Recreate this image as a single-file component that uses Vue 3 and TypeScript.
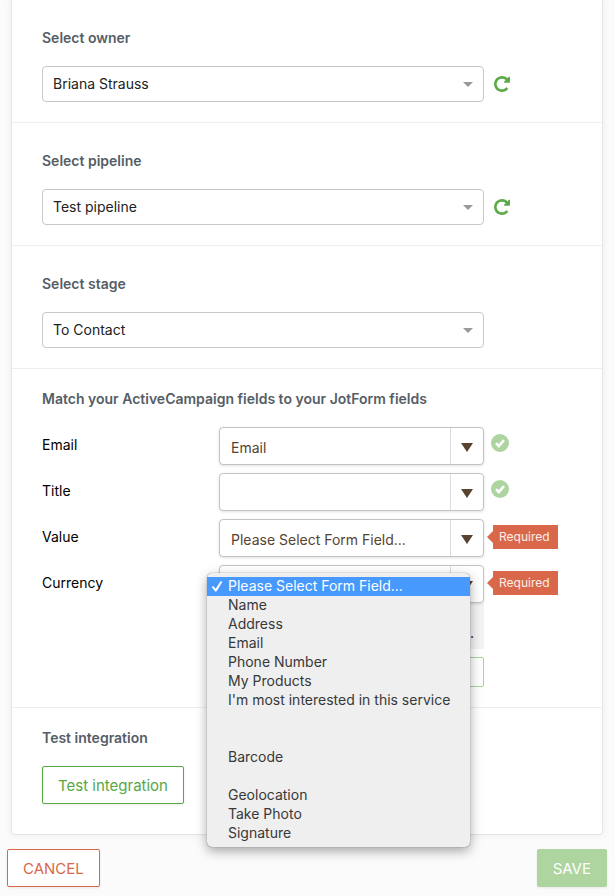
<script setup lang="ts">
import { ref } from 'vue'

interface Picker {
  id: string
  title: string
  value: string
  refreshable: boolean
}

interface FieldMatch {
  id: string
  label: string
  value: string
  matched: boolean
}

const placeholder = 'Please Select Form Field...'

const pickers = ref<Picker[]>([
  { id: 'owner', title: 'Select owner', value: 'Briana Strauss', refreshable: true },
  { id: 'pipeline', title: 'Select pipeline', value: 'Test pipeline', refreshable: true },
  { id: 'stage', title: 'Select stage', value: 'To Contact', refreshable: false },
])

const fields = ref<FieldMatch[]>([
  { id: 'email', label: 'Email', value: 'Email', matched: true },
  { id: 'title', label: 'Title', value: '', matched: true },
  { id: 'value', label: 'Value', value: placeholder, matched: false },
  { id: 'currency', label: 'Currency', value: placeholder, matched: false },
])

const openField = ref('currency')

const options: string[] = [
  placeholder,
  'Name',
  'Address',
  'Email',
  'Phone Number',
  'My Products',
  "I'm most interested in this service",
  '',
  '',
  'Barcode',
  '',
  'Geolocation',
  'Take Photo',
  'Signature',
]

function choose(field: FieldMatch, option: string) {
  field.value = option
  openField.value = ''
}
</script>

<template>
  <main class="page">
    <div class="card">
      <section v-for="picker in pickers" :key="picker.id" class="section picker">
        <label class="title" :for="picker.id">{{ picker.title }}</label>
        <div class="line">
          <div class="picker-box">
            <select :id="picker.id" class="picker-select">
              <option>{{ picker.value }}</option>
            </select>
            <svg class="caret" viewBox="0 0 10 5" aria-hidden="true"><path d="M0 0h10L5 5z" fill="#999" /></svg>
          </div>
          <button v-if="picker.refreshable" class="refresh" type="button" aria-label="Refresh">
            <svg viewBox="128 128 1536 1536" aria-hidden="true">
              <path
                fill="#5dab48"
                d="M1664 256v448q0 26-19 45t-45 19h-448q-42 0-59-40-17-39 14-69l138-138q-148-137-349-137-104 0-198.5 40.5t-163.5 109.5-109.5 163.5-40.5 198.5 40.5 198.5 109.5 163.5 163.5 109.5 198.5 40.5q119 0 225-52t179-147q7-10 23-12 15 0 25 9l137 138q9 8 9.5 20.5t-7.5 22.5q-109 132-264 204.5t-327 72.5q-156 0-298-61t-245-164-164-245-61-298 61-298 164-245 245-164 298-61q147 0 284.5 55.5t244.5 156.5l130-129q29-31 70-14 39 17 39 59z"
              />
            </svg>
          </button>
        </div>
      </section>

      <section class="section">
        <h2 class="title">Match your ActiveCampaign fields to your JotForm fields</h2>
        <div class="rows">
          <div v-for="field in fields" :key="field.id" class="row">
            <label class="label" :for="field.id">{{ field.label }}</label>
            <div class="field">
              <div class="field-box">
                <select :id="field.id" v-model="field.value" class="field-select">
                  <option v-for="(option, i) in options" :key="i" :value="option">{{ option }}</option>
                </select>
                <span class="field-arrow">
                  <svg viewBox="0 0 12 9" aria-hidden="true"><path d="M0 0h12L6 9z" fill="#57432f" /></svg>
                </span>
              </div>
              <ul v-if="openField === field.id" class="menu" role="listbox" :aria-label="field.label">
                <li
                  v-for="(option, i) in options"
                  :key="i"
                  class="option"
                  :class="{ active: i === 0 }"
                  role="option"
                  :aria-selected="i === 0"
                  @click="choose(field, option)"
                >
                  <svg v-if="i === 0" class="tick" viewBox="0 0 10 11" aria-hidden="true">
                    <path d="M1 6.2l2.8 3.4L9 1.2" fill="none" stroke="#fff" stroke-width="2" stroke-linecap="round" stroke-linejoin="round" />
                  </svg>
                  {{ option }}
                </li>
              </ul>
            </div>
            <span v-if="field.matched" class="status ok">
              <svg viewBox="0 0 18 18" role="img" aria-label="Matched">
                <circle cx="9" cy="9" r="9" fill="#aed4a0" />
                <path d="M5 9.2l2.8 2.8L13 6.2" fill="none" stroke="#fff" stroke-width="2.6" />
              </svg>
            </span>
            <span v-else class="status"><span class="required">Required</span></span>
          </div>
        </div>
        <div class="extra">
          <p class="note">.</p>
          <button class="add" type="button" aria-label="Add field"></button>
        </div>
      </section>

      <section class="section last">
        <h2 class="title">Test integration</h2>
        <button class="button test" type="button">Test integration</button>
      </section>
    </div>

    <footer class="actions">
      <button class="button cancel" type="button">CANCEL</button>
      <button class="button save" type="button">SAVE</button>
    </footer>
  </main>
</template>

<style>
body {
  margin: 0;
  background: #fbfbfb;
}
</style>

<style scoped>
.page {
  font-family: Inter, Roboto, "Liberation Sans", sans-serif;
  font-size: 14px;
  line-height: 20px;
  color: #000;
}

.page *,
.page *::before {
  box-sizing: border-box;
}

.card {
  margin: 0 12px 0 11px;
  background: #fff;
  border: 1px solid #e6e6e0;
  border-top: 0;
  border-radius: 0 0 4px 4px;
  box-shadow: 0 0 8px rgba(0, 0, 0, 0.06);
}

.section {
  display: flex;
  flex-direction: column;
  align-items: stretch;
  gap: 18px;
  padding: 20px 30px;
  border-bottom: 1px solid #eeeeea;
}

.section.picker {
  padding-top: 28px;
}

.section.last {
  align-items: flex-start;
  padding-bottom: 30px;
  border-bottom: 0;
}

.title {
  margin: 0;
  font-size: 14px;
  font-weight: 600;
  line-height: 20px;
  color: #555e66;
}

select,
button {
  margin: 0;
  font: inherit;
}

.line {
  display: flex;
  align-items: center;
  gap: 10px;
}

.picker-box {
  display: grid;
  flex: 0 1 442px;
  align-items: center;
}

.picker-select,
.caret {
  grid-area: 1 / 1;
}

.picker-select {
  width: 100%;
  height: 36px;
  padding: 0 30px 0 10px;
  appearance: none;
  background: #fff;
  border: 1px solid #c8c8c8;
  border-radius: 4px;
  color: #222;
}

.caret {
  justify-self: end;
  width: 10px;
  height: 5px;
  margin-right: 11px;
  pointer-events: none;
}

.refresh {
  display: flex;
  padding: 0;
  background: none;
  border: 0;
}

.refresh svg {
  width: 16px;
  height: 16px;
}

.rows {
  display: flex;
  flex-direction: column;
  gap: 8px;
}

.row {
  display: grid;
  grid-template-columns: 177px minmax(0, 265px) 75px;
  align-items: start;
}

.label {
  line-height: 36px;
}

.field {
  position: relative;
}

.field-box {
  display: grid;
}

.field-select,
.field-arrow {
  grid-area: 1 / 1;
}

.field-select {
  width: 100%;
  height: 38px;
  padding: 3px 36px 0 11px;
  appearance: none;
  background: #fff;
  border: 1px solid #c3c3c3;
  border-radius: 4px;
  box-shadow: 0 1px 3px rgba(0, 0, 0, 0.12);
  color: #57432f;
}

.field-arrow {
  display: flex;
  align-items: center;
  justify-content: center;
  justify-self: end;
  width: 33px;
  margin: 1px;
  padding-top: 2px;
  border-left: 1px solid #dcdcdc;
  pointer-events: none;
}

.field-arrow svg {
  width: 12px;
  height: 9px;
}

.status {
  display: flex;
  align-items: center;
  height: 36px;
  padding-left: 9px;
}

.status.ok {
  height: 32px;
  padding-left: 7px;
}

.status svg {
  width: 18px;
  height: 18px;
}

.required {
  position: relative;
  padding: 0 8px 0 6px;
  background: #d9684a;
  color: #fbeee9;
  font-size: 12px;
  line-height: 24px;
}

.required::before {
  content: "";
  position: absolute;
  top: 6px;
  left: -6px;
  border: 6px solid transparent;
  border-left: 0;
  border-right-color: #d9684a;
}

.menu {
  position: absolute;
  z-index: 2;
  top: 8px;
  right: 14px;
  left: -12px;
  margin: 0;
  padding: 4px 0;
  list-style: none;
  background: #efefef;
  border-radius: 5px;
  box-shadow: 0 0 1px rgba(0, 0, 0, 0.6), 0 4px 12px rgba(0, 0, 0, 0.35);
  color: #383838;
}

.option {
  position: relative;
  height: 19px;
  padding-left: 21px;
  line-height: 18px;
  white-space: nowrap;
}

.option.active {
  background: #4799fd;
  color: #fff;
}

.tick {
  position: absolute;
  top: 4px;
  left: 5px;
  width: 10px;
  height: 11px;
}

.extra {
  display: flex;
  flex-direction: column;
  gap: 8px;
  max-width: 265px;
  margin: -18px 0 0 177px;
}

.note {
  height: 46px;
  margin: 0;
  padding: 20px 10px 0 0;
  background: #f3f3f3;
  text-align: right;
}

.add {
  height: 30px;
  background: #fff;
  border: 1px solid #a9d39b;
  border-radius: 2px;
}

.button {
  height: 38px;
  padding: 2px 15px 0;
  border: 1px solid;
  border-radius: 2px;
  background: #fff;
  font-size: 15px;
  box-shadow: 0 1px 3px rgba(0, 0, 0, 0.08);
}

.test {
  color: #55a844;
}

.cancel {
  color: #d9684a;
}

.save {
  background: #aed4a0;
  border-color: #aed4a0;
  color: #fff;
}

.actions {
  display: flex;
  justify-content: space-between;
  padding: 14px 8px 9px 7px;
}
</style>
